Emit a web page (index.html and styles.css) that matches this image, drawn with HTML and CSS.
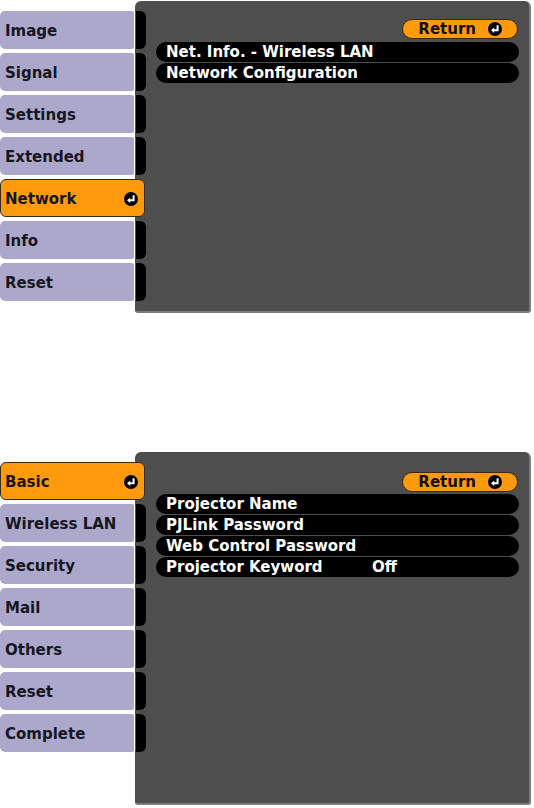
FILE: index.html
```html
<!DOCTYPE html>
<html>
<head>
<meta charset="utf-8">
<link rel="stylesheet" href="styles.css">
</head>
<body>
<div class="screen screen-top">
  <div class="sidebar">
    <div class="tab">Image</div>
    <div class="tab">Signal</div>
    <div class="tab">Settings</div>
    <div class="tab">Extended</div>
    <div class="tab active">Network<svg class="enter" viewBox="0 0 14 14"><circle cx="7" cy="7" r="7"/><path d="M9.6 3.2V8.2H5.2" fill="none" stroke="#fff" stroke-width="2"/><path d="M3 8.2L6.2 5.4V11Z" fill="#fff"/></svg></div>
    <div class="tab">Info</div>
    <div class="tab">Reset</div>
  </div>
  <div class="panel">
    <div class="return">Return<svg class="enter" viewBox="0 0 14 14"><circle cx="7" cy="7" r="7"/><path d="M9.6 3.2V8.2H5.2" fill="none" stroke="#fff" stroke-width="2"/><path d="M3 8.2L6.2 5.4V11Z" fill="#fff"/></svg></div>
    <div class="rows">
      <div class="row">Net. Info. - Wireless LAN</div>
      <div class="row">Network Configuration</div>
    </div>
  </div>
</div>

<div class="screen screen-bottom">
  <div class="sidebar">
    <div class="tab active">Basic<svg class="enter" viewBox="0 0 14 14"><circle cx="7" cy="7" r="7"/><path d="M9.6 3.2V8.2H5.2" fill="none" stroke="#fff" stroke-width="2"/><path d="M3 8.2L6.2 5.4V11Z" fill="#fff"/></svg></div>
    <div class="tab">Wireless LAN</div>
    <div class="tab">Security</div>
    <div class="tab">Mail</div>
    <div class="tab">Others</div>
    <div class="tab">Reset</div>
    <div class="tab">Complete</div>
  </div>
  <div class="panel">
    <div class="return">Return<svg class="enter" viewBox="0 0 14 14"><circle cx="7" cy="7" r="7"/><path d="M9.6 3.2V8.2H5.2" fill="none" stroke="#fff" stroke-width="2"/><path d="M3 8.2L6.2 5.4V11Z" fill="#fff"/></svg></div>
    <div class="rows">
      <div class="row">Projector Name</div>
      <div class="row">PJLink Password</div>
      <div class="row">Web Control Password</div>
      <div class="row"><span class="label">Projector Keyword</span><span class="value">Off</span></div>
    </div>
  </div>
</div>
</body>
</html>
```

FILE: styles.css
```css
html, body {
  margin: 0;
  padding: 0;
  background: #fff;
}
body {
  width: 534px;
  height: 808px;
  overflow: hidden;
  font-family: "DejaVu Sans", sans-serif;
  font-weight: bold;
  font-size: 15px;
}
.screen {
  display: flex;
  align-items: flex-start;
}
.screen-top {
  margin-top: 1px;
  height: 312px;
}
.screen-bottom {
  margin-top: 139px;
  height: 353px;
}
.sidebar {
  width: 135px;
  flex: none;
  display: flex;
  flex-direction: column;
  gap: 4px;
  padding-top: 10px;
}
.tab {
  position: relative;
  width: 134px;
  height: 38px;
  box-sizing: border-box;
  padding-left: 5px;
  padding-top: 1px;
  display: flex;
  align-items: center;
  background: #aba8cb;
  color: #16161e;
  border-radius: 5px 2px 2px 5px;
}
.tab::after {
  content: "";
  position: absolute;
  left: 136px;
  top: 0;
  width: 10px;
  height: 38px;
  background: #000;
  border-radius: 0 6px 6px 0;
}
.tab.active {
  width: 145px;
  background: #ff9a0c;
  border: 1px solid #3a2a10;
  border-radius: 6px;
  padding-left: 4px;
  z-index: 2;
  justify-content: space-between;
  padding-right: 6px;
}
.tab.active::after {
  display: none;
}
.enter {
  width: 14px;
  height: 14px;
  flex: none;
}
.panel {
  flex: none;
  width: 396px;
  height: 100%;
  box-sizing: border-box;
  background: #4e4e4e;
  border-right: 2px solid #7c7c7c;
  border-bottom: 2px solid #7c7c7c;
  border-radius: 6px 6px 3px 3px;
  padding: 18px 10px 0 21px;
  display: flex;
  flex-direction: column;
}
.screen-bottom .panel {
  padding-top: 20px;
}
.return {
  align-self: flex-end;
  width: 116px;
  height: 20px;
  box-sizing: border-box;
  margin-right: 1px;
  background: #ff9a0c;
  border: 1px solid #3a2a10;
  border-radius: 10px;
  color: #111;
  display: flex;
  align-items: center;
  justify-content: flex-end;
  gap: 12px;
  padding-right: 15px;
}
.rows {
  display: flex;
  flex-direction: column;
  gap: 1px;
  margin-top: 2px;
}
.screen-top .rows {
  margin-top: 3px;
}
.row {
  height: 20px;
  background: #000;
  border-radius: 10px;
  color: #fff;
  display: flex;
  align-items: center;
  padding-left: 10px;
}
.row .label {
  width: 206px;
}
```
